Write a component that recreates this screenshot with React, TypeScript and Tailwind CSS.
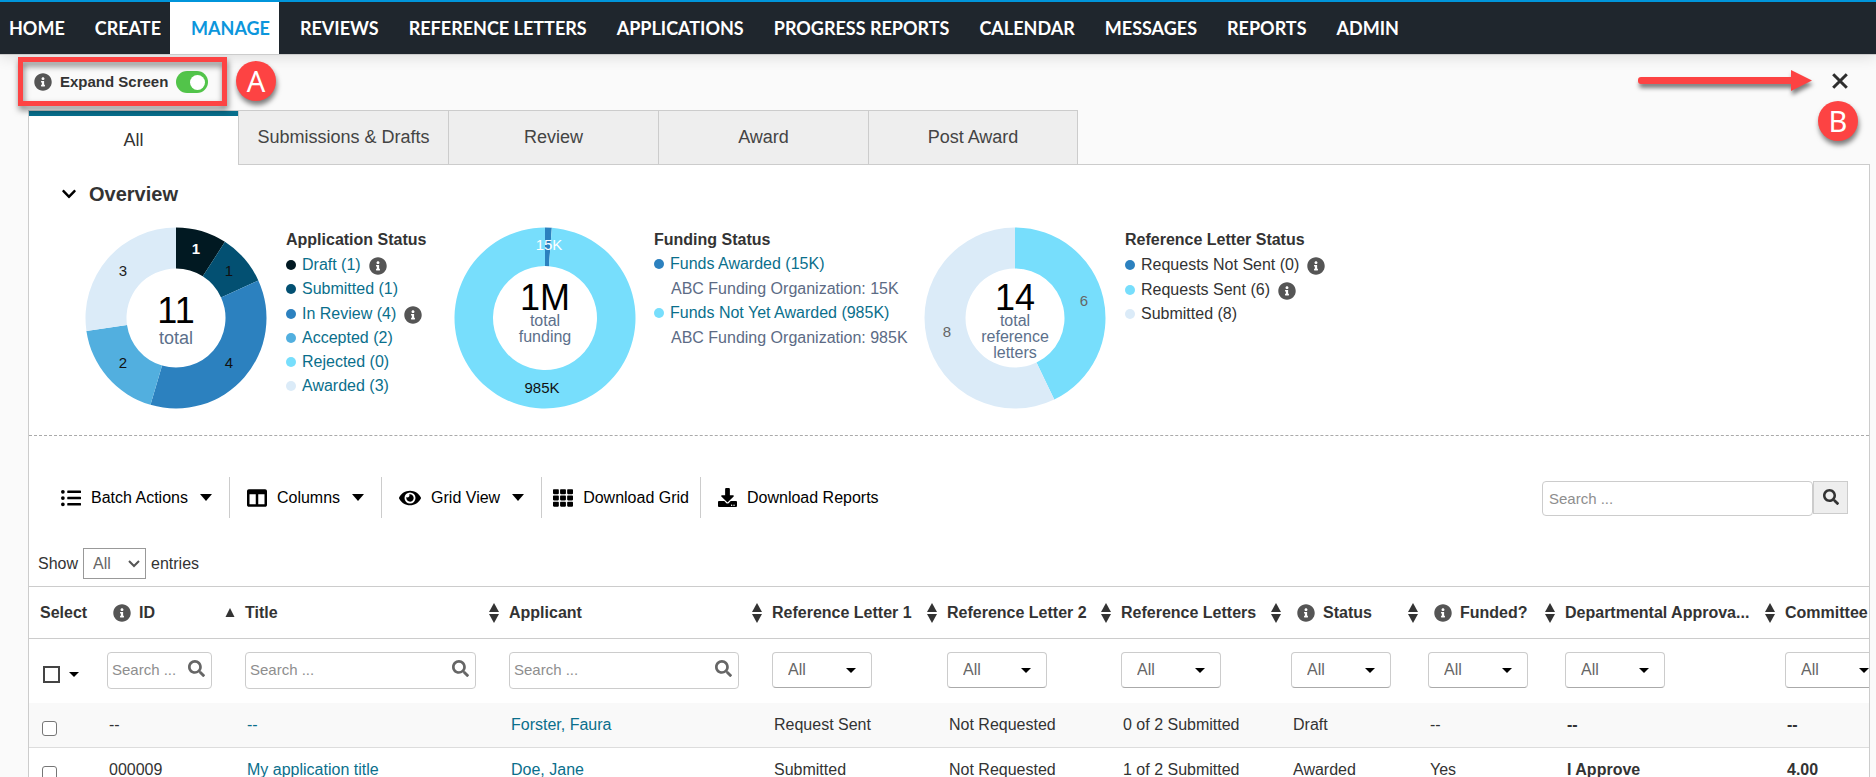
import React, { useState } from 'react';
import { FaChevronDown, FaColumns, FaDownload, FaEye, FaInfoCircle, FaListUl, FaSearch, FaTh } from 'react-icons/fa';

interface Slice {
  value: number;
  color: string;
}

interface SliceLabel {
  text: string;
  x: number;
  y: number;
  fill: string;
  bold?: boolean;
}

interface LegendItem {
  label: string;
  color?: string;
  info?: boolean;
  link?: boolean;
}

interface Column {
  title: string;
  width: number;
  filter: 'check' | 'search' | 'select';
  info?: boolean;
  sort?: 'up' | 'both';
}

const NAV_ITEMS = [
  'HOME',
  'CREATE',
  'MANAGE',
  'REVIEWS',
  'REFERENCE LETTERS',
  'APPLICATIONS',
  'PROGRESS REPORTS',
  'CALENDAR',
  'MESSAGES',
  'REPORTS',
  'ADMIN',
];

const TABS = ['All', 'Submissions & Drafts', 'Review', 'Award', 'Post Award'];

const COLUMNS: Column[] = [
  { title: 'Select', width: 68, filter: 'check' },
  { title: 'ID', width: 138, filter: 'search', info: true, sort: 'up' },
  { title: 'Title', width: 264, filter: 'search', sort: 'both' },
  { title: 'Applicant', width: 263, filter: 'search', sort: 'both' },
  { title: 'Reference Letter 1', width: 175, filter: 'select', sort: 'both' },
  { title: 'Reference Letter 2', width: 174, filter: 'select', sort: 'both' },
  { title: 'Reference Letters', width: 170, filter: 'select', sort: 'both' },
  { title: 'Status', width: 137, filter: 'select', info: true, sort: 'both' },
  { title: 'Funded?', width: 137, filter: 'select', info: true, sort: 'both' },
  { title: 'Departmental Approva...', width: 220, filter: 'select', sort: 'both' },
  { title: 'Committee', width: 200, filter: 'select', sort: 'both' },
];

const ROWS = [
  ['--', '--', 'Forster, Faura', 'Request Sent', 'Not Requested', '0 of 2 Submitted', 'Draft', '--', '--', '--'],
  ['000009', 'My application title', 'Doe, Jane', 'Submitted', 'Not Requested', '1 of 2 Submitted', 'Awarded', 'Yes', 'I Approve', '4.00'],
];

function InfoButton({ label }: { label: string }) {
  return (
    <button type="button" aria-label={label} className="shrink-0 text-[#555]">
      <FaInfoCircle size={18} />
    </button>
  );
}

function arcPath(start: number, end: number, outer: number, inner: number) {
  const point = (angle: number, r: number) => {
    const rad = angle * Math.PI * 2 - Math.PI / 2;
    return `${91 + r * Math.cos(rad)} ${91 + r * Math.sin(rad)}`;
  };
  const large = end - start > 0.5 ? 1 : 0;
  return `M${point(start, outer)} A${outer} ${outer} 0 ${large} 1 ${point(end, outer)} L${point(end, inner)} A${inner} ${inner} 0 ${large} 0 ${point(start, inner)} Z`;
}

interface DonutProps {
  slices: Slice[];
  labels: SliceLabel[];
  inner: number;
  total: string;
  totalY: number;
  caption: string[];
  captionY: number;
  captionSize: number;
}

function Donut({ slices, labels, inner, total, totalY, caption, captionY, captionSize }: DonutProps) {
  const sum = slices.reduce((acc, s) => acc + s.value, 0);
  let at = 0;
  return (
    <svg width="182" height="182" viewBox="0 0 182 182" className="shrink-0" role="img" aria-label={`${total} ${caption.join(' ')}`}>
      {slices.map((s, i) => {
        const start = at / sum;
        at += s.value;
        return <path key={i} d={arcPath(start, at / sum, 90.5, inner)} fill={s.color} />;
      })}
      {labels.map((l) => (
        <text key={`${l.x}-${l.y}`} x={l.x} y={l.y} fill={l.fill} fontSize="15" fontWeight={l.bold ? 700 : 400} textAnchor="middle">
          {l.text}
        </text>
      ))}
      <text x="91" y={totalY} fontSize="36" fill="#000" textAnchor="middle">
        {total}
      </text>
      {caption.map((line, i) => (
        <text key={line} x="91" y={captionY + i * 16} fontSize={captionSize} fill="#5c708b" textAnchor="middle">
          {line}
        </text>
      ))}
    </svg>
  );
}

function Legend({ title, items }: { title: string; items: LegendItem[] }) {
  return (
    <div className="pt-px">
      <h3 className="font-bold leading-6">{title}</h3>
      <ul>
        {items.map((item) => (
          <li key={item.label} className={`flex items-center ${item.info || !item.color ? 'h-[25px]' : 'h-6'}`}>
            {item.color ? (
              <span className="mr-[6px] size-[10px] rounded-full" style={{ backgroundColor: item.color }} />
            ) : (
              <span className="w-[17px]" />
            )}
            {item.link ? (
              <a href="#" className="text-[#0a6f8c]">{item.label}</a>
            ) : (
              <span className={item.color ? '' : 'text-[#5c6b85]'}>{item.label}</span>
            )}
            {item.info && (
              <span className="ml-2 flex pt-[2px]">
                <InfoButton label={`About ${item.label}`} />
              </span>
            )}
          </li>
        ))}
      </ul>
    </div>
  );
}

function SortIcon({ kind }: { kind: 'up' | 'both' }) {
  return (
    <svg width="10" height="20" viewBox="0 0 10 20" fill="#333" className="shrink-0" aria-hidden="true">
      {kind === 'up' ? (
        <path d="M5 5 L9.5 14 H0.5 Z" />
      ) : (
        <>
          <path d="M5 0 L10 9 H0 Z" />
          <path d="M0 11 H10 L5 20 Z" />
        </>
      )}
    </svg>
  );
}

function Triangle() {
  return (
    <svg width="10" height="5" viewBox="0 0 10 5" aria-hidden="true">
      <path d="M0 0 H10 L5 5 Z" />
    </svg>
  );
}

function ColumnFilter({ column }: { column: Column }) {
  if (column.filter === 'check') {
    return (
      <div className="flex items-center gap-[9px] pl-1 pt-2">
        <input type="checkbox" aria-label="Select all" className="size-[17px] appearance-none border-2 border-[#444] bg-white checked:bg-[#444]" />
        <button type="button" aria-label="Selection options">
          <Triangle />
        </button>
      </div>
    );
  }
  if (column.filter === 'search') {
    return (
      <label className="mr-[23px] flex h-[37px] items-center rounded border border-[#ccc] bg-white pl-1 pr-[6px] text-[15px]">
        <input
          type="text"
          placeholder="Search ..."
          aria-label={`Search ${column.title}`}
          className="min-w-0 flex-1 bg-transparent text-[#333] outline-none placeholder:text-[#8e8e8e]"
        />
        <FaSearch size={17} className="mb-1 shrink-0 text-[#666]" />
      </label>
    );
  }
  return (
    <div className="relative w-[100px]">
      <select
        aria-label={`Filter ${column.title}`}
        className="h-9 w-full appearance-none rounded border border-b-[#aaa] border-[#ccc] bg-white pb-px pl-[15px] text-[#666]"
      >
        <option>All</option>
      </select>
      <span className="pointer-events-none absolute right-4 top-4">
        <Triangle />
      </span>
    </div>
  );
}

function ToolButton({ icon, label, menu }: { icon: React.ReactNode; label: string; menu?: boolean }) {
  return (
    <button type="button" className="flex items-center">
      {icon}
      <span className="ml-[10px]">{label}</span>
      {menu && (
        <svg width="12" height="7" viewBox="0 0 12 7" className="ml-3" aria-hidden="true">
          <path d="M0 0 H12 L6 7 Z" />
        </svg>
      )}
    </button>
  );
}

function Callout({ letter }: { letter: string }) {
  return (
    <span className="flex size-10 items-center justify-center rounded-full bg-[#fd4343] pb-[2px] font-['Noto_Sans',sans-serif] text-[29px] leading-none text-white shadow-[1px_4px_5px_rgba(0,0,0,0.5)]">
      {letter}
    </span>
  );
}

export default function App() {
  const [expanded, setExpanded] = useState(true);
  const [activeTab, setActiveTab] = useState('All');
  const [checked, setChecked] = useState<number[]>([]);

  const toggleRow = (index: number) => {
    setChecked((prev) => (prev.includes(index) ? prev.filter((i) => i !== index) : [...prev, index]));
  };

  return (
    <div className="h-screen overflow-hidden bg-[#fafafa] font-['Liberation_Sans',Arial,sans-serif] text-base text-[#333]">
      {/* Main navigation */}
      <header className="border-b border-t-2 border-b-[#ccc] border-t-[#0095db] bg-[#1f262d] shadow-[0_2px_14px_rgba(0,0,0,0.12)]">
        <nav className="flex h-[52px] font-['Lato',sans-serif] text-lg font-bold">
          {NAV_ITEMS.map((item, i) => (
            <a
              key={item}
              href="#"
              className={`flex items-center whitespace-nowrap pr-[9px] ${i === 0 ? 'pl-[9px]' : 'pl-[21px]'} ${
                item === 'MANAGE' ? 'bg-white text-[#0c96dc]' : 'text-white'
              }`}
            >
              {item}
            </a>
          ))}
        </nav>
      </header>

      {/* Expand toggle and close */}
      <div className="relative flex h-[55px] items-center justify-between pb-px pl-[34px] pr-7">
        <div className="flex items-center gap-2">
          <InfoButton label="About expand screen" />
          <span id="expand-label" className="text-[15px] font-bold">Expand Screen</span>
          <button
            type="button"
            role="switch"
            aria-checked={expanded}
            aria-labelledby="expand-label"
            onClick={() => setExpanded(!expanded)}
            className={`flex h-[22px] w-8 items-center rounded-full px-[3px] ${expanded ? 'justify-end bg-[#52c44a]' : 'justify-start bg-gray-400'}`}
          >
            <span className="size-[15px] rounded-full bg-white" />
          </button>
        </div>
        <button type="button" aria-label="Close" className="pb-[3px] text-[#2d2d2d]">
          <svg width="16" height="16" viewBox="0 0 16 16" stroke="currentColor" strokeWidth="3" aria-hidden="true">
            <path d="M1.2 1.2 L14.8 14.8 M14.8 1.2 L1.2 14.8" />
          </svg>
        </button>

        {/* Annotations over the bar */}
        <div className="pointer-events-none absolute left-[18px] top-[2px] z-10 h-[49px] w-[209px] border-[5px] border-[#fd4343] drop-shadow-[1px_4px_3px_rgba(0,0,0,0.5)]" />
        <div className="pointer-events-none absolute left-[236px] top-[6px] z-10">
          <Callout letter="A" />
        </div>
        <div className="pointer-events-none absolute right-[18px] top-[46px] z-10">
          <Callout letter="B" />
        </div>
        <svg
          width="174"
          height="22"
          viewBox="0 0 174 22"
          fill="#fd4343"
          className="pointer-events-none absolute right-16 top-[15px] drop-shadow-[1px_4px_2px_rgba(0,0,0,0.5)]"
          aria-hidden="true"
        >
          <rect x="0" y="7" width="156" height="7" rx="3" />
          <path d="M153 0 L174 10.5 L153 21 Z" />
        </svg>
      </div>

      {/* Tabs */}
      <div role="tablist" className="ml-7 flex">
        {TABS.map((tab) => (
          <button
            key={tab}
            type="button"
            role="tab"
            aria-selected={tab === activeTab}
            onClick={() => setActiveTab(tab)}
            className={`w-[210px] border-l border-t border-[#ccc] text-lg last:border-r ${
              tab === activeTab ? 'relative z-[1] -mb-px h-[55px] bg-white pt-[3px] shadow-[inset_0_5px_0_#086f8d]' : 'h-[54px] bg-[#eee] pb-[2px] text-[#444]'
            }`}
          >
            {tab}
          </button>
        ))}
      </div>

      <main className="ml-7 mr-[6px] overflow-hidden border border-[#ccc] bg-white">
        {/* Overview */}
        <section className="border-b border-dashed border-[#aaa] pb-[26px] pl-8 pt-[13px]">
          <button type="button" className="flex items-center gap-3 text-xl font-bold leading-8">
            <FaChevronDown size={16} className="text-black" />
            Overview
          </button>
          <div className="mt-[17px] flex pl-6">
            <div className="flex w-[369px] gap-[19px]">
              <Donut
                inner={49.5}
                total="11"
                totalY={96}
                caption={['total']}
                captionY={117}
                captionSize={18}
                slices={[
                  { value: 1, color: '#011922' },
                  { value: 1, color: '#035072' },
                  { value: 4, color: '#2c81bf' },
                  { value: 2, color: '#52afdf' },
                  { value: 3, color: '#dbebf8' },
                ]}
                labels={[
                  { text: '1', x: 111, y: 27, fill: '#fff', bold: true },
                  { text: '1', x: 144, y: 49, fill: '#111' },
                  { text: '4', x: 144, y: 141, fill: '#111' },
                  { text: '2', x: 38, y: 141, fill: '#111' },
                  { text: '3', x: 38, y: 49, fill: '#222' },
                ]}
              />
              <Legend
                title="Application Status"
                items={[
                  { label: 'Draft (1)', color: '#011922', info: true, link: true },
                  { label: 'Submitted (1)', color: '#035072', link: true },
                  { label: 'In Review (4)', color: '#2c81bf', info: true, link: true },
                  { label: 'Accepted (2)', color: '#52afdf', link: true },
                  { label: 'Rejected (0)', color: '#77defc', link: true },
                  { label: 'Awarded (3)', color: '#dbebf8', link: true },
                ]}
              />
            </div>
            <div className="flex w-[470px] gap-[18px]">
              <Donut
                inner={52}
                total="1M"
                totalY={83}
                caption={['total', 'funding']}
                captionY={99}
                captionSize={16}
                slices={[
                  { value: 12, color: '#2c81bf' },
                  { value: 985, color: '#77defc' },
                ]}
                labels={[
                  { text: '15K', x: 95, y: 23, fill: '#fff' },
                  { text: '985K', x: 88, y: 166, fill: '#111' },
                ]}
              />
              <Legend
                title="Funding Status"
                items={[
                  { label: 'Funds Awarded (15K)', color: '#2c81bf', link: true },
                  { label: 'ABC Funding Organization: 15K' },
                  { label: 'Funds Not Yet Awarded (985K)', color: '#77defc', link: true },
                  { label: 'ABC Funding Organization: 985K' },
                ]}
              />
            </div>
            <div className="flex gap-[19px]">
              <Donut
                inner={49.5}
                total="14"
                totalY={83}
                caption={['total', 'reference', 'letters']}
                captionY={99}
                captionSize={16}
                slices={[
                  { value: 6, color: '#77defc' },
                  { value: 8, color: '#dbebf8' },
                ]}
                labels={[
                  { text: '6', x: 160, y: 79, fill: '#666' },
                  { text: '8', x: 23, y: 110, fill: '#666' },
                ]}
              />
              <Legend
                title="Reference Letter Status"
                items={[
                  { label: 'Requests Not Sent (0)', color: '#2c81bf', info: true },
                  { label: 'Requests Sent (6)', color: '#77defc', info: true },
                  { label: 'Submitted (8)', color: '#dbebf8' },
                ]}
              />
            </div>
          </div>
        </section>

        {/* Toolbar */}
        <div className="mt-[41px] flex items-center justify-between pl-8 pr-[21px]">
          <div className="flex h-[41px] divide-x divide-[#ccc] text-black">
            <div className="flex pr-[17px]">
              <ToolButton icon={<FaListUl size={20} />} label="Batch Actions" menu />
            </div>
            <div className="flex px-[17px]">
              <ToolButton icon={<FaColumns size={20} />} label="Columns" menu />
            </div>
            <div className="flex px-[17px]">
              <ToolButton icon={<FaEye size={22} />} label="Grid View" menu />
            </div>
            <div className="flex px-[11px]">
              <ToolButton icon={<FaTh size={20} />} label="Download Grid" />
            </div>
            <div className="flex pl-[17px]">
              <ToolButton icon={<FaDownload size={19} />} label="Download Reports" />
            </div>
          </div>
          <form className="flex items-start pt-px" onSubmit={(e) => e.preventDefault()}>
            <input
              type="text"
              placeholder="Search ..."
              aria-label="Search all"
              className="h-[35px] w-[271px] rounded border border-[#ccc] px-[6px] text-[15px] outline-none placeholder:text-[#8e8e8e]"
            />
            <button type="submit" aria-label="Search" className="flex h-[33px] w-[35px] items-center justify-center border border-[#ccc] bg-[#eee] text-[#333]">
              <FaSearch size={16} />
            </button>
          </form>
        </div>

        <div className="mb-[7px] mt-[30px] flex items-center gap-[5px] pl-[9px]">
          <label htmlFor="page-size">Show</label>
          <div className="relative">
            <select id="page-size" className="h-[31px] w-[63px] appearance-none border border-[#999] bg-white pl-[9px] text-[#666]">
              <option>All</option>
            </select>
            <svg width="12" height="8" viewBox="0 0 12 8" fill="none" stroke="#555" strokeWidth="2" className="pointer-events-none absolute right-[6px] top-3" aria-hidden="true">
              <path d="M1 1 L6 6 L11 1" />
            </svg>
          </div>
          <span>entries</span>
        </div>

        {/* Applications grid */}
        <table className="w-[1946px] table-fixed border-separate border-spacing-0 text-left">
          <colgroup>
            {COLUMNS.map((c) => (
              <col key={c.title} style={{ width: c.width }} />
            ))}
          </colgroup>
          <thead>
            <tr className="h-[53px]">
              {COLUMNS.map((c) => (
                <th key={c.title} scope="col" className="border-y border-[#ccc] p-0">
                  <div className={`flex items-center justify-between ${c.filter === 'check' ? 'pl-[11px]' : c.info ? 'pl-4' : 'pl-[10px]'}`}>
                    <span className="flex items-center gap-2 whitespace-nowrap">
                      {c.info && <InfoButton label={`About ${c.title}`} />}
                      {c.title}
                    </span>
                    {c.sort && <SortIcon kind={c.sort} />}
                  </div>
                </th>
              ))}
            </tr>
            <tr className="h-16">
              {COLUMNS.map((c) => (
                <td key={c.title} className="p-0 pb-[2px] pl-[10px]">
                  <ColumnFilter column={c} />
                </td>
              ))}
            </tr>
          </thead>
          <tbody>
            {ROWS.map((row, index) => (
              <tr key={row[0]} className="h-[45px] odd:bg-[#f9f9f9]">
                <td className="border-b border-[#ddd] p-0 pl-[13px] pt-[6px]">
                  <input
                    type="checkbox"
                    aria-label={`Select ${row[0]}`}
                    checked={checked.includes(index)}
                    onChange={() => toggleRow(index)}
                    className="block size-[15px] appearance-none rounded-[3px] border border-[#767676] bg-white checked:bg-[#0a6f8c]"
                  />
                </td>
                {row.map((cell, i) => (
                  <td key={i} className={`border-b border-[#ddd] p-0 pl-3 ${i > 7 ? 'font-bold' : ''}`}>
                    {i === 1 || i === 2 ? <a href="#" className="text-[#0a6f8c]">{cell}</a> : cell}
                  </td>
                ))}
              </tr>
            ))}
          </tbody>
        </table>
      </main>
    </div>
  );
}
